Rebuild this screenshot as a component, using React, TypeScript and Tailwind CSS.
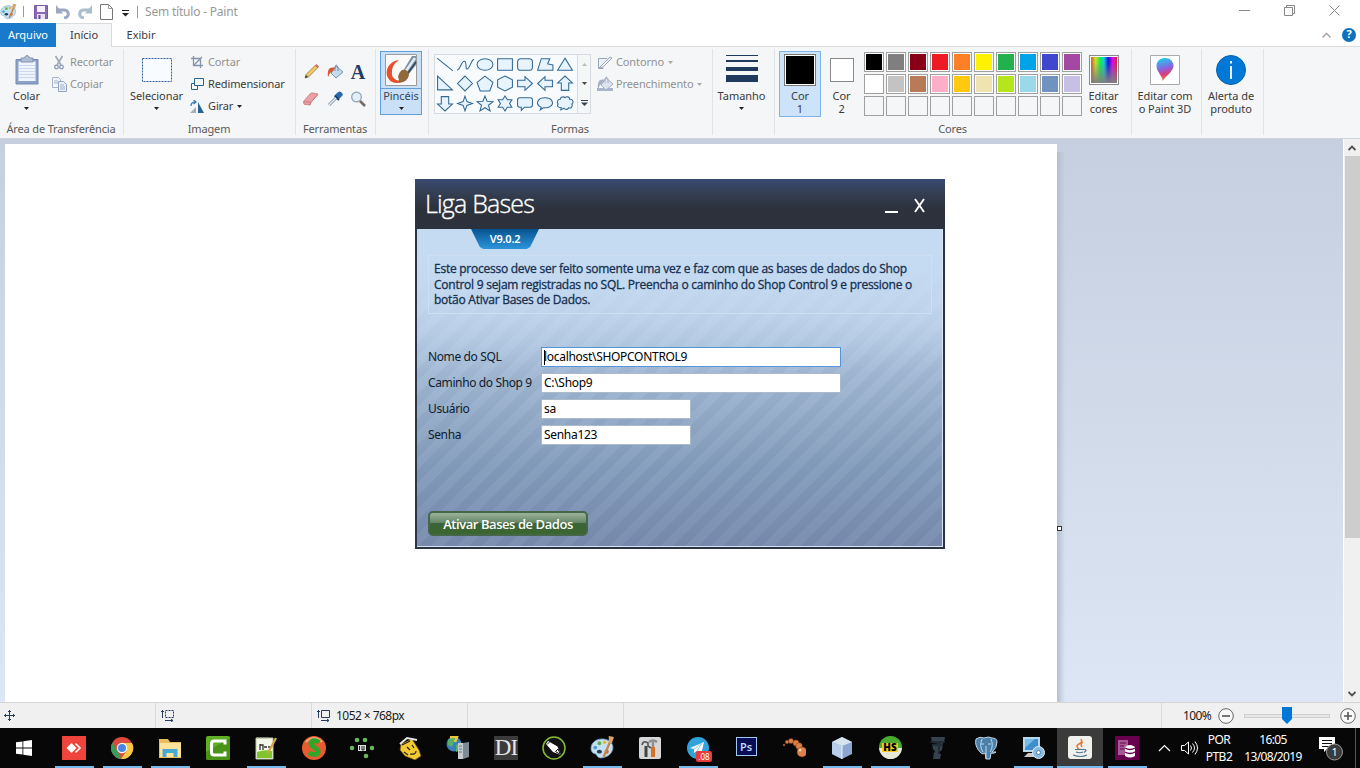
import type { ReactNode } from 'react';

type BoxProps = { w: number; h: number; vb?: string; children: ReactNode; className?: string };

function Svg({ w, h, vb, children, className = '' }: BoxProps) {
  return (
    <svg width={w} height={h} viewBox={vb ?? `0 0 ${w} ${h}`} fill="none" className={`shrink-0 ${className}`}>
      {children}
    </svg>
  );
}

const Arrow = ({ color = '#222' }: { color?: string }) => (
  <Svg w={5} h={3}><path d="M0 0h5L2.5 3z" fill={color} /></Svg>
);

function Palette({ size }: { size: number }) {
  return (
    <Svg w={size} h={size} vb="0 0 24 24">
      <path d="M1 13C1 6 8 3 14 4c5 1 8 4 8 8 0 5-5 10-12 10-3 0-3-3-5-4-2 0-4-2-4-5z" fill="#c5e0f0" stroke="#6fa5c8" strokeWidth=".8" />
      <circle cx="5" cy="12" r="1.8" fill="#4b9fe0" /><circle cx="9" cy="8" r="1.9" fill="#59b34a" /><circle cx="14" cy="7" r="1.7" fill="#eab43a" />
      <circle cx="16" cy="16" r="2" fill="#e05a3a" /><ellipse cx="9" cy="16" rx="2.4" ry="1.8" fill="#253a50" />
      <path d="M21 2l-4 10-4 9" stroke="#c98343" strokeWidth="2.2" /><path d="M18 1l5 1-2 6-3-1z" fill="#dca267" />
    </Svg>
  );
}

function TitleBar() {
  return (
    <header className="flex h-[23px] shrink-0 items-center bg-white">
      <div className="flex h-full flex-1 items-center">
        <Palette size={17} />
        <i className="ml-[6px] h-[11px] w-px bg-[#9a9a9a]" />
        <Svg w={14} h={14} className="ml-[10px]">
          <path d="M.5.5h13v13H.5z" fill="#8a68b4" stroke="#7a5aa6" /><path d="M3 1h8v6H3z" fill="#f4f1fa" /><path d="M3 9h8v5H3z" fill="#e6e0ef" /><path d="M4.500 10h2v4h-2z" fill="#6d4b9b" />
        </Svg>
        <Svg w={14} h={14} className="ml-[8px]">
          <path d="M3 5h5c3 0 4.300 2 4.300 4S11 12.500 8 13" stroke="#9aa8c0" strokeWidth="3" /><path d="M0 0v8.500h7z" fill="#9aa8c0" />
        </Svg>
        <Svg w={14} h={14} className="ml-[8px]">
          <path d="M11 5H6C3 5 1.700 7 1.700 9S3 12.500 6 13" stroke="#a9bdcc" strokeWidth="3" /><path d="M14 0v8.500H7z" fill="#a9bdcc" />
        </Svg>
        <Svg w={13} h={16} className="ml-[8px]"><path d="M.5.5h8l4 4v11H.5z" fill="#fff" stroke="#777" /><path d="M8.500.5v4h4" stroke="#999" /></Svg>
        <Svg w={7} h={7} className="ml-[9px] mt-[3px]"><path d="M0 .5h7" stroke="#222" /><path d="M0 3h7L3.500 6.500z" fill="#222" /></Svg>
        <i className="ml-[8px] h-[12px] w-px bg-[#9a9a9a]" />
        <span className="ml-[7px] text-[12px] tracking-[-0.2px] text-[#999]">Sem título - Paint</span>
      </div>
      <div className="flex w-[121px] justify-between pr-[20px] pb-[3px]">
        <Svg w={11} h={11}><path d="M0 5.500h11" stroke="#888" /></Svg>
        <Svg w={11} h={11}><path d="M.5 2.500h8v8h-8zM2.500 2.500v-2h8v8h-2" stroke="#888" /></Svg>
        <Svg w={11} h={11}><path d="M.5.5l10 10m0-10l-10 10" stroke="#888" /></Svg>
      </div>
    </header>
  );
}

function TabRow() {
  return (
    <nav className="flex h-[24px] shrink-0 bg-white text-[11px] text-[#3b3b3b]">
      <div className="flex w-[56px] items-center justify-center bg-[#1979ca] text-white">Arquivo</div>
      <div className="flex w-[56px] items-center justify-center border-t border-r border-[#dadbdc] bg-[#f5f6f7] pl-px">Início</div>
      <div className="flex w-[58px] items-center justify-center border-b border-[#dadbdc] pt-px">Exibir</div>
      <div className="flex flex-1 items-center justify-end gap-[11px] border-b border-[#dadbdc] pr-[4px]">
        <Svg w={9} h={6}><path d="M.5 5.500l4-4 4 4" stroke="#a99a95" strokeWidth="1.300" /></Svg>
        <span className="flex size-[14px] items-center justify-center rounded-full bg-[#0f6fc0] text-[11px] font-bold text-white">?</span>
      </div>
    </nav>
  );
}

function Group({ width, label, children }: { width: string; label?: string; children: ReactNode }) {
  return (
    <section className={`relative flex shrink-0 flex-col ${width}`}>
      <div className="flex h-[74px]">{children}</div>
      <div className="flex h-[17px] items-center justify-center pr-[2px] text-[11px] tracking-[-0.14px] whitespace-nowrap text-[#5a5a5a]">{label}</div>
      <i className="absolute top-[2px] right-0 h-[86px] w-px bg-[#e2e3e4]" />
    </section>
  );
}

function Big({ width, label, second, children }: { width: string; label: string; second?: string; children: ReactNode }) {
  return (
    <div className={`flex shrink-0 flex-col items-center ${width}`}>
      <div className="flex h-[42px] items-center justify-center pt-[4px]">{children}</div>
      <span className="h-[13px] text-[11px] leading-[13px] tracking-[-0.05px] whitespace-nowrap text-[#3b3b3b]">{label}</span>
      {second ? (
        <span className="h-[13px] text-[11px] leading-[13px] tracking-[-0.05px] whitespace-nowrap text-[#3b3b3b]">{second}</span>
      ) : (
        <span className="mt-[5px]"><Arrow /></span>
      )}
    </div>
  );
}

function Row({ icon, text, dim, arrow }: { icon: ReactNode; text: string; dim?: boolean; arrow?: boolean }) {
  return (
    <div className={`flex h-[22px] items-center text-[11px] tracking-[-0.12px] whitespace-nowrap ${dim ? 'text-[#929292]' : 'text-[#3b3b3b]'}`}>
      <span className="mr-[3px] flex w-[16px] justify-center">{icon}</span>
      {text}
      {arrow && <span className="ml-[4px]"><Arrow color={dim ? '#aaa' : '#222'} /></span>}
    </div>
  );
}

const shapes = [
  'M1 2l15 12', 'M1 13C4 14 5 4 8 5s0 9 3 7 3-8 6-9', 'M1 8a7.500 5.500 0 1 0 15 0a7.500 5.500 0 1 0-15 0', 'M1.500 2.500h14v11h-14z',
  'M4.500 2.500h8q3 0 3 3v5q0 3-3 3h-8q-3 0-3-3v-5q0-3 3-3', 'M5 2.500h8l-2 5 5 1v5H1.500z', 'M8.500 2l7 11.500h-14z',
  'M1.500 1v13h14z', 'M8.500 1l7 7-7 7-7-7z', 'M8.500 1l7.500 6-3 8H4L1 7z', 'M8.500 1l7 3.500v7L8.500 15l-7-3.500v-7z',
  'M1.500 5h7V1.500L15.500 8l-7 6.500V11h-7z', 'M15.500 5h-7V1.500L1.500 8l7 6.500V11h7z', 'M5 14.500v-7H1.500L8.500 1l7 6.500H12v7z',
  'M5 1.500v7H1.500L8.500 15l7-6.500H12v-7z', 'M8.500 1l1.800 5.200L15.500 8l-5.200 1.800L8.500 15l-1.800-5.200L1.500 8l5.200-1.800z',
  'M8.500 1l2 4.800 5.500.4-4.200 3.500 1.500 5.300-4.800-3-4.800 3 1.500-5.300L1 6.200l5.500-.4z',
  'M8.500 1l2.200 3.500h4.300L12.800 8l2.200 3.500h-4.300L8.500 15l-2.200-3.500H2L4.200 8 2 4.500h4.300z',
  'M3.500 2.500h10q2 0 2 2v5q0 2-2 2H8l-3 3v-3H3.500q-2 0-2-2v-5q0-2 2-2', 'M5 11.500C-1 9 1 2.500 8.500 2.500S18 9 12 11.500c-2 .8-4 .6-5 .5l-3 2z',
  'M4 4c0-2 3-3 4.500-1.500C10 1 13 1.500 13 4c3-.5 4 3 2 4.500 1 2.500-1 4.500-3 3.500-1 2-3.500 2-4.500.5L4.500 14l.5-2C2 12 .5 10 2 8.500.5 6.500 1.500 4 4 4z',
];

const colors = [
  '#000000', '#7f7f7f', '#880015', '#ed1c24', '#ff7f27', '#fff200', '#22b14c', '#00a2e8', '#3f48cc', '#a349a4',
  '#ffffff', '#c3c3c3', '#b97a57', '#ffaec9', '#ffc90e', '#efe4b0', '#b5e61d', '#99d9ea', '#7092be', '#c8bfe7',
];

function Bucket({ dim }: { dim?: boolean }) {
  return (
    <Svg w={17} h={16}>
      {dim && <path d="M0 12h16v3H0z" fill="#a9b5c8" />}
      <path d="M9 2l7 6-7 6-5-5z" fill={dim ? '#dde4ee' : '#c3dcee'} stroke={dim ? '#a5b1c4' : '#7894ae'} />
      <path d="M8 7V3q1-4 3 0v4" stroke={dim ? '#a5b1c4' : '#7b8da0'} />
      <path d="M8 4C3 2.500 0 5 1 13c2-3 1-4 4-5z" fill={dim ? '#a5b1c4' : '#d8572f'} />
    </Svg>
  );
}

function Ribbon() {
  return (
    <div className="flex h-[92px] shrink-0 border-b border-[#cfd3dc] bg-[#f5f6f7]">
      <Group width="w-[124px]" label="Área de Transferência">
        <Big width="w-[53px]" label="Colar">
          <Svg w={24} h={30} className="ml-px">
            <path d="M1 4.500h22v24.500H1z" fill="#8ca0c8" stroke="#788bb4" /><path d="M3.500 6.500h17v19.500h-17z" fill="#f0f4fc" />
            <path d="M4 10.500h16M4 13.500h16M4 16.500h16M4 19.500h16M4 22.500h16" stroke="#cbd7ee" /><path d="M6 3h3q3-5 6 0h3v4H6z" fill="#aebcd6" stroke="#8293b8" />
          </Svg>
        </Big>
        <div className="-ml-[2px] pt-[4px]">
          <Row dim text="Recortar" icon={<Svg w={10} h={15}><path d="M1.500 1l5.500 9M8.500 1L3 10" stroke="#a0a9b8" strokeWidth="1.700" /><circle cx="2.500" cy="12" r="1.800" stroke="#8b99b3" strokeWidth="1.300" /><circle cx="7.500" cy="12" r="1.800" stroke="#8b99b3" strokeWidth="1.300" /></Svg>} />
          <Row dim text="Copiar" icon={<Svg w={15} h={15}><path d="M.5.5h6l2 2v8h-8z" fill="#f3f6fb" stroke="#a4b2cb" /><path d="M6.500 4.500h5l3 3v7h-8z" fill="#eaf0f8" stroke="#93a4c2" /><path d="M2 4h4M2 6h4M8 8h4M8 10h5M8 12h5" stroke="#a4b2cb" /></Svg>} />
        </div>
      </Group>

      <Group width="w-[172px]" label="Imagem">
        <Big width="w-[65px]" label="Selecionar">
          <Svg w={30} h={24} className="ml-px"><path d="M.5.5h29v23H.5z" fill="#f8fbff" stroke="#2a6296" strokeDasharray="2 1" /></Svg>
        </Big>
        <div className="pt-[4px]">
          <Row dim text="Cortar" icon={<Svg w={12} h={12}><path d="M0 2.500h9.500V12M2.500 0v9.500H12M3 9l8-8" stroke="#8295aa" strokeWidth="1.300" /></Svg>} />
          <Row text="Redimensionar" icon={<Svg w={13} h={12}><path d="M.5 5.500h6v6h-6z" fill="#fff" stroke="#266391" /><path d="M3.500.5h9v7h-9z" fill="#f4f9fe" stroke="#266391" /></Svg>} />
          <Row text="Girar" arrow icon={<Svg w={14} h={13}><path d="M8 2l6 11H8z" fill="#276694" /><path d="M0 13l6-6v6z" fill="#a6acb2" /><path d="M1 6q0-4 4-4M3.500 0L6 2 3.500 4" stroke="#2878b7" strokeWidth="1.200" /></Svg>} />
        </div>
      </Group>

      <Group width="w-[80px]" label="Ferramentas">
        <div className="mt-[10px] ml-[3px] grid h-[54px] grid-cols-[24px_24px_22px] place-items-center">
          <Svg w={15} h={15}><path d="M1 14l1-3.500L11.500 1l2.500 2.500L4.500 13z" fill="#f2c463" stroke="#8e7440" strokeWidth=".7" /><path d="M11 1.500L12.500 0 15 2.500 13.500 4z" fill="#cf6c65" /><path d="M1 14l1-3 2 2z" fill="#3a3a3a" /></Svg>
          <Bucket />
          <span className="font-['Liberation_Serif',serif] text-[20px] leading-none font-bold text-[#263c5e]">A</span>
          <Svg w={16} h={14}><path d="M.5 9.500l7-8q.5-.7 1.500-.6l6 1.100-7 8.500-1 2.500-6-.8z" fill="#eda0a3" stroke="#ba6d72" strokeWidth=".7" /><path d="M.7 9.500l7 1L15 2.500M7.500 10.500V13" stroke="#c9747c" strokeWidth=".8" /></Svg>
          <Svg w={16} h={16}><path d="M10 2q3-3 5 0 2 2-1 4l-3 3-4-4z" fill="#286ba8" /><path d="M8 5l4 4" stroke="#163e70" strokeWidth="2" /><path d="M2 14l7-7" stroke="#7892ab" strokeWidth="3" /><path d="M2 14l7-7" stroke="#eef5fa" strokeWidth="1.300" /></Svg>
          <Svg w={16} h={16}><circle cx="6.500" cy="6" r="4.800" fill="#e2f0fb" stroke="#98aabd" strokeWidth="1.400" /><path d="M10 10l5 5" stroke="#746c65" strokeWidth="2.600" /></Svg>
        </div>
      </Group>

      <Group width="w-[53px]">
        <button className="mt-[4px] ml-[4px] flex h-[64px] w-[42px] flex-col items-center border border-[#629fd9] bg-[#c9e0f7]">
          <span className="flex h-[37px] w-full items-center justify-center border-b border-[#629fd9] pb-px">
            <Svg w={32} h={32}>
              <path d="M.5.5h31v31H.5z" fill="#fafafa" stroke="#9a9a9a" />
              <path d="M14 6C4 7-1 17 3 24c3 6 11 6 15 3-7 0-12-3-11-9 0-6 3-9 7-12z" fill="#e8502b" />
              <path d="M31 2v9l-8 10-5-4L27 2z" fill="#7890a5" /><path d="M30 4l-9 13" stroke="#e3ebf1" strokeWidth="2.500" /><path d="M31 8l-8 11" stroke="#34485c" strokeWidth="1.500" />
              <path d="M17 16q6-1 7 5-1 7-11 8 2-2 0-6 1-5 4-7z" fill="#93683b" />
            </Svg>
          </span>
          <span className="text-[11px] leading-[14px] tracking-[-0.05px] text-[#34485e]">Pincéis</span>
          <span className="mt-[4px] leading-none"><Arrow /></span>
        </button>
      </Group>

      <Group width="w-[284px]" label="Formas">
        <div className="mt-[7px] ml-[5px] flex h-[60px] w-[157px] border border-[#d5dbe1] bg-[#f8fbfe]">
          <div className="grid w-[142px] shrink-0 grid-cols-7 place-items-center pr-[2px]">
            {shapes.map((d, i) => <Svg key={i} w={18} h={17} vb="0 0 17 16"><path d={d} fill={i < 2 ? 'none' : '#e8f4fd'} stroke="#326894" /></Svg>)}
          </div>
          <div className="grid flex-1 grid-rows-3 place-items-center border-l border-[#d5dbe1] bg-[#f5f6f7]">
            <Svg w={5} h={3}><path d="M0 3h5L2.500 0z" fill="#bbb" /></Svg>
            <Arrow color="#444" />
            <Svg w={7} h={6}><path d="M0 .5h7" stroke="#345" /><path d="M0 2.500h7L3.500 6z" fill="#345" /></Svg>
          </div>
        </div>
        <div className="ml-[6px] pt-[4px]">
          <Row dim arrow text="Contorno" icon={<Svg w={15} h={13}><path d="M9 2.500H.5v10h5M1 12L12 1l2 1-9 9z" fill="#edf0f5" stroke="#98a6bb" /></Svg>} />
          <Row dim arrow text="Preenchimento" icon={<Bucket dim />} />
        </div>
      </Group>

      <Group width="w-[62px]">
        <Big width="w-[57px]" label="Tamanho">
          <div className="flex h-[30px] w-[32px] flex-col">
            <i className="h-px bg-[#1f3a5c]" /><i className="mt-[4px] h-[2px] bg-[#1f3a5c]" /><i className="mt-[5px] h-[4px] bg-[#1f3a5c]" /><i className="mt-[4px] h-[7px] bg-[#1f3a5c]" />
          </div>
        </Big>
      </Group>

      <Group width="w-[357px]" label="Cores">
        <div className="mt-[4px] ml-[4px] flex h-[66px] w-[42px] shrink-0 flex-col items-center border border-[#7eb4ea] bg-[#cce3f9] pt-[2px] text-[11px] leading-[13px] text-[#3b3b3b]">
          <i className="mb-[3px] h-[32px] w-[32px] shrink-0 border border-[#777] bg-black outline outline-1 -outline-offset-2 outline-white" />
          <span className="tracking-[-0.05px]">Cor</span><span>1</span>
        </div>
        <Big width="w-[41px]" label="Cor" second="2"><i className="ml-px size-[24px] border border-[#888] bg-white" /></Big>
        <div className="mt-[5px] ml-[2px] grid h-[64px] shrink-0 grid-cols-10 gap-[2px]">
          {colors.map((c) => <i key={c} className="size-[20px] border border-[#a0a0a0] bg-white p-px"><b className="block size-full" style={{ backgroundColor: c }} /></i>)}
          {Array.from({ length: 10 }, (_, i) => <i key={i} className="size-[20px] border border-[#a0a0a0]" />)}
        </div>
        <Big width="w-[43px]" label="Editar" second="cores">
          <div className="size-[30px] border border-[#8a8a8a] bg-white p-px"><div className="h-full bg-[linear-gradient(to_top,#808080,transparent_80%),linear-gradient(90deg,#d55a20,#cd3_18%,#1e4_35%,#1cd_50%,#11d_66%,#d1d_84%,#e13)]" /></div>
        </Big>
      </Group>

      <Group width="w-[70px]">
        <Big width="w-[66px]" label="Editar com" second="o Paint 3D">
          <Svg w={30} h={30}>
            <defs><linearGradient id="pin" x1=".4" y1="0" x2=".6" y2="1"><stop stopColor="#20c9ed" /><stop offset=".45" stopColor="#8c61df" /><stop offset=".7" stopColor="#dd3b78" /><stop offset="1" stopColor="#ef9b26" /></linearGradient></defs>
            <path d="M.5.5h29v29H.5z" fill="#fff" stroke="#ababab" /><path d="M15 3c5 0 8.500 3.500 8.500 8 0 5-6.500 9-11 15 .5-5-6-9-6-15 0-4.500 3.500-8 8.500-8z" fill="url(#pin)" />
          </Svg>
        </Big>
      </Group>
      <Group width="w-[62px]">
        <Big width="w-[58px]" label="Alerta de" second="produto">
          <Svg w={30} h={30}><circle cx="15" cy="15" r="14.500" fill="#0078d7" stroke="#0862ad" /><path d="M15 11v13M15 6v2.500" stroke="#fff" strokeWidth="1.800" /></Svg>
        </Big>
      </Group>
    </div>
  );
}

function Field({ label, value, width, focus }: { label: string; value: string; width: string; focus?: boolean }) {
  return (
    <label className="flex h-[26px] items-center text-[12px] tracking-[-0.38px] text-[#101c2c]">
      <span className="w-[113px] whitespace-nowrap">{label}</span>
      <span className={`flex h-[20px] items-center border bg-white pl-[2px] tracking-[-0.3px] text-black ${width} ${focus ? 'border-[#5595dc]' : 'border-[#abbacb]'}`}>
        {focus && <i className="-mr-px h-[15px] w-px bg-black" />}
        {value}
      </span>
    </label>
  );
}

function Dialog() {
  return (
    <div className="absolute top-[40px] left-[415px] flex h-[370px] w-[530px] flex-col border-2 border-[#2b3442] font-['Noto_Sans','Open_Sans',sans-serif]">
      <div className="-mx-[2px] -mt-[2px] flex h-[50px] shrink-0 items-center justify-between bg-[linear-gradient(#394b73,#343e51_30%,#2c313b_60%,#2c323d)] pr-[20px] pl-[10px] text-white">
        <h1 className="font-['Open_Sans',sans-serif] text-[25px] font-light tracking-[-0.8px] [-webkit-text-stroke:0.35px_white]">Liga Bases</h1>
        <div className="flex items-end gap-[16px] pt-[4px]">
          <i className="mb-[4px] h-[2px] w-[13px] bg-white" />
          <Svg w={11} h={22}><path d="M1 4l9 13M10 4L1 17" stroke="#fff" strokeWidth="1.900" /></Svg>
        </div>
      </div>
      <div className="flex flex-1 flex-col border-r border-b border-[#d8e4f5] bg-[linear-gradient(#c5dbf1_8%,#c5dbf100_45%),repeating-linear-gradient(135deg,#ffffff0a_0px,#ffffff0a_9px,#00000005_9px,#00000005_18px),linear-gradient(#c5dbf1_0%,#bacfe8_25%,#9cb3cf_50%,#839cbc_75%,#778bae_100%)] px-[11px]">
        <div className="ml-[43px] h-[20px] w-[68px] bg-[linear-gradient(#07538f,#2c95dc)] text-center text-[11px] leading-[20px] font-semibold tracking-[-0.2px] text-white [clip-path:polygon(0_0,100%_0,87%_90%,82%_100%,18%_100%,13%_90%)]">V9.0.2</div>
        <p className="mt-[6px] h-[59px] w-[504px] border border-[#cfdff2] pt-[5px] pl-[5px] font-['Open_Sans',sans-serif] text-[12px] leading-[15.700px] tracking-[-0.25px] whitespace-nowrap text-[#152f50] [-webkit-text-stroke:0.3px_#152f50]">
          Este processo deve ser feito somente uma vez e faz com que as bases de dados do Shop<br />
          Control 9 sejam registradas no SQL. Preencha o caminho do Shop Control 9 e pressione o<br />
          botão Ativar Bases de Dados.
        </p>
        <div className="mt-[30px]">
          <Field label="Nome do SQL" value="localhost\SHOPCONTROL9" width="w-[300px]" focus />
          <Field label="Caminho do Shop 9" value="C:\Shop9" width="w-[300px]" />
          <Field label="Usuário" value="sa" width="w-[150px]" />
          <Field label="Senha" value="Senha123" width="w-[150px]" />
        </div>
        <button className="mt-[63px] h-[25px] w-[160px] rounded-[5px] border-2 border-[#46664a] bg-[linear-gradient(#9db39b,#668768_45%,#3c6438_50%,#3a6630)] font-['Open_Sans',sans-serif] text-[13px] leading-[20px] font-semibold tracking-[-0.44px] whitespace-nowrap text-white">Ativar Bases de Dados</button>
      </div>
    </div>
  );
}

function Workspace() {
  return (
    <main className="relative flex h-[563px] shrink-0 bg-[linear-gradient(#c5cfdf,#dce6f4)]">
      <div className="mt-[5px] ml-[5px] w-[1052px] shrink-0 bg-white" />
      <div className="mt-[13px] w-[8px] bg-[linear-gradient(90deg,#b3bfd2,transparent)]" />
      <div className="flex-1" />
      <i className="absolute top-[387px] left-[1057px] size-[5px] border border-[#333] bg-white" />
      <div className="flex w-[17px] flex-col items-center border-l border-white bg-[#f0f0f0]">
        <span className="flex h-[17px] items-center"><Svg w={8} h={6}><path d="M.5 5l3.500-3.500L7.500 5" stroke="#505050" strokeWidth="1.800" /></Svg></span>
        <i className="h-[382px] w-[15px] bg-[#cdcdcd]" />
        <span className="mt-auto flex h-[17px] items-center"><Svg w={8} h={6}><path d="M.5 1l3.500 3.500L7.500 1" stroke="#505050" strokeWidth="1.800" /></Svg></span>
      </div>
      <Dialog />
    </main>
  );
}

function ZoomButton({ plus }: { plus?: boolean }) {
  return <Svg w={16} h={16}><circle cx="8" cy="8" r="7.300" fill="#f8f8f8" stroke="#666" /><path d={plus ? 'M4 8h8M8 4v8' : 'M4 8h8'} stroke="#555" strokeWidth="1.600" /></Svg>;
}

function StatusBar() {
  return (
    <footer className="flex h-[26px] shrink-0 items-stretch border-t border-[#d5d5d5] bg-[#f0f0f0] text-[12px] text-[#1a1a1a]">
      <div className="flex w-[156px] items-center border-r border-[#d9d9d9] pl-[4px]"><Svg w={11} h={11}><path d="M5.500 0v11M0 5.500h11M4 2l1.500-1.500L7 2M4 9l1.500 1.500L7 9M2 4L.5 5.500 2 7M9 4l1.500 1.500L9 7" stroke="#263c58" /></Svg></div>
      <div className="flex w-[156px] items-center border-r border-[#d9d9d9] pl-[5px]"><Svg w={13} h={12}><path d="M1.500 0v8M0 2l1.500-1.500L3 2M4 10.500h8M10 9l2 1.500-2 1.500" stroke="#263c58" /><path d="M4.500.5h8v7h-8z" stroke="#263c58" strokeDasharray="2 1" /></Svg></div>
      <div className="flex w-[156px] items-center border-r border-[#d9d9d9] pl-[5px] tracking-[-0.55px]"><Svg w={13} h={12} className="mr-[6px]"><path d="M1.500 0v8M0 2l1.500-1.500L3 2M4 10.500h8M10 9l2 1.500-2 1.500M4.500.5h8v7h-8z" stroke="#263c58" /></Svg>1052 × 768px</div>
      <div className="w-[156px] border-r border-[#d9d9d9]" />
      <div className="flex-1 border-r border-[#d9d9d9]" />
      <div className="flex w-[198px] items-center pl-[21px] tracking-[-0.6px]">
        <span className="w-[35px]">100%</span>
        <ZoomButton />
        <div className="relative ml-[10px] h-[4px] w-[86px] border border-[#d0d0d0] bg-[#e7e7e7]">
          <Svg w={10} h={17} className="absolute -top-[8px] left-[37px]"><path d="M0 0h10v12l-5 5-5-5z" fill="#0078d7" /></Svg>
        </div>
        <span className="ml-[10px]"><ZoomButton plus /></span>
      </div>
    </footer>
  );
}

const apps: { on?: boolean; icon: ReactNode }[] = [
  { on: true, icon: <Svg w={24} h={24}><path d="M0 0h24v24H0z" fill="#ef443b" /><path d="M9.500 7l5 5-5 5-5-5z" fill="#fff" /><path d="M13.500 7.500L18 12l-4.500 4.500" stroke="#fff" strokeWidth="1.600" /></Svg> },
  { on: true, icon: <Svg w={24} h={24}><circle cx="12" cy="12" r="11" fill="#db4a3d" /><path d="M2.500 6.500L9 18l2 5A11 11 0 0 1 2.500 6.500z" fill="#389d58" /><path d="M12 7h10a11 11 0 0 1-11 16l5.500-8z" fill="#f6c944" /><circle cx="12" cy="12" r="5.200" fill="#fff" /><circle cx="12" cy="12" r="4" fill="#4a86e8" /></Svg> },
  { on: true, icon: <Svg w={24} h={24}><path d="M1 3h9l2 3h11v16H1z" fill="#e9bd59" /><path d="M2 7h21v14H2z" fill="#fbe39b" /><path d="M4.500 13h15v8h-4v-4h-7v4h-4z" fill="#46a9d4" /></Svg> },
  { icon: <Svg w={24} h={24}><rect width="24" height="24" rx="2" fill="#5eaf24" /><path d="M0 16L24 2v20q0 2-2 2H2q-2 0-2-2z" fill="#4b9317" /><path d="M19 8.500V5H8Q5.500 5 5.500 8v8q0 3 2.500 3h11v-3.500" stroke="#fff" strokeWidth="3" /></Svg> },
  { on: true, icon: <Svg w={24} h={24}><path d="M2 2h17v21H2z" fill="#f4f8e8" stroke="#b8c7a2" /><path d="M3 16q8-3 15-1v7H3z" fill="#7fc42c" /><path d="M4 3V1m3 2V1m3 2V1m3 2V1" stroke="#aaa" /><path d="M6 8v6m0-5h3v5m1-3h3m1 0h3" stroke="#333" strokeWidth="1.300" /><path d="M22 2l-7 13-1 2" stroke="#d5a648" strokeWidth="2.300" /></Svg> },
  { icon: <Svg w={24} h={24}><circle cx="12" cy="12" r="12" fill="#e65c30" /><path d="M4 6q8-8 16 0" stroke="#f9aa7a" strokeWidth="2" /><path d="M17 6.500c-3-3-9-2-8 1.500s7 4 7 7.500-6 4-9 1" stroke="#2fa62a" strokeWidth="5" /></Svg> },
  { icon: <Svg w={24} h={24}>{[[7, 4], [15, 4], [2, 12], [22, 12], [16, 20]].map(([x, y]) => <circle key={`${x}-${y}`} cx={x} cy={y} r="2.300" fill="#65b95a" />)}<path d="M8 9h8v6H8z" fill="#ddd" /><path d="M9.500 10v4M12 10v4h2v-4" stroke="#222" /></Svg> },
  { icon: <Svg w={24} h={24}><path d="M3 8L14 3l7 11 2 6-6 4-10-4-5-6z" fill="#f3ca31" stroke="#674b15" strokeWidth=".7" /><path d="M2 8L9 2l10 2" stroke="#e5e5e5" strokeWidth="2" /><path d="M4 9l8-4M14 9l2 3M9 11l3 3M12 18q6 1 6-3M6 16l4 3" stroke="#222" strokeWidth="1.200" /></Svg> },
  { icon: <Svg w={24} h={24}><circle cx="8" cy="8" r="7.500" fill="#387fc0" /><path d="M2 4q5-6 7 0l-3 7-4-2zM10 9l5-3v8l-5 2z" fill="#55b268" /><path d="M4 1h7l-2 5" stroke="#eacb35" strokeWidth="2.500" /><path d="M12 7h5v16h-5z" fill="#c8cdd3" /><path d="M17 7l6-1v15l-6 2z" fill="#7f8b94" /><path d="M13 10h3m-3 3h3m-3 3h3" stroke="#69747d" /></Svg> },
  { icon: <span className="flex size-[24px] items-center justify-center bg-[#3b3b3b] font-['Liberation_Serif',serif] text-[23px] leading-none tracking-[-1px] text-[#e5e5e5]">DI</span> },
  { icon: <Svg w={24} h={24}><circle cx="12" cy="12" r="11" fill="#111" stroke="#84bc39" strokeWidth="1.500" /><path d="M6 5l9.500 5.500L19 19l-8-3L4 8z" fill="#fff" /><path d="M5 8.500l3-3M13.500 15.500L16 13l2.500 5.500z" stroke="#111" /></Svg> },
  { on: true, icon: <Palette size={25} /> },
  { icon: <Svg w={22} h={24}><rect y="1" width="22" height="22" rx="2" fill="#d5d7d9" /><path d="M3 9q1-4 4-3l2 1v3l3 2" stroke="#555" strokeWidth="1.600" /><path d="M10 6q4-3 8 0M14 6v6" stroke="#8c8c8c" strokeWidth="2.400" /><path d="M14 11v10" stroke="#d66f27" strokeWidth="4" /><path d="M7 10v11" stroke="#444" strokeWidth="3" /></Svg> },
  { on: true, icon: <span className="relative"><Svg w={24} h={24}><circle cx="12" cy="12" r="11" fill="#2fa4dc" /><path d="M4 12l14-6-3 13-4-4-3 2v-4z" fill="#fff" /><path d="M8 13l8-6-5 8" stroke="#9cc9e4" /></Svg><b className="absolute -right-[2px] -bottom-[2px] h-[11px] w-[16px] rounded-[2px] bg-[#e53c3c] text-center text-[8px] leading-[11px] font-normal text-white">.08</b></span> },
  { icon: <span className="mb-[3px] flex h-[19px] w-[21px] items-center justify-center border border-[#a4c9ee] bg-[#080c54] text-[11px] leading-none font-semibold text-[#bcdcfb]">Ps</span> },
  { icon: <Svg w={24} h={24}>{[[2, 9, 1], [5, 6, 1.8], [9, 5, 2.5], [14, 7, 3], [17, 10, 3.3], [20, 16, 5]].map(([x, y, r]) => <circle key={x} cx={x} cy={y} r={r} fill="#dc8148" stroke="#7d3517" strokeWidth=".5" />)}<circle cx="18" cy="14" r="1.500" fill="#ffd4ac" /></Svg> },
  { on: true, icon: <Svg w={22} h={24}><path d="M11 1l10 5v12l-10 5L1 18V6z" fill="#8ba7d0" /><path d="M11 1l10 5-10 4L1 6z" fill="#d6e4ef" /><path d="M1 6l10 4v13L1 18z" fill="#b9cfe9" /><path d="M11 10v13" stroke="#ecf4fb" /></Svg> },
  { on: true, icon: <span className="flex size-[23px] items-center justify-center rounded-full bg-[linear-gradient(#4cac2e_50%,#e8e8d9_50%)] text-[10px] font-bold text-black"><b className="bg-[#f5cd24] px-px leading-[9px]">HS</b></span> },
  { icon: <Svg w={18} h={24}><path d="M2 1h14l-1 6H3zM3 8l11-1-1 7-5 4-4-5zM5 16l7 2-1 5H4z" fill="#34434f" /><path d="M1 6h15M3 9h11M10 10v7" stroke="#1d272f" strokeWidth="1.500" /></Svg> },
  { icon: <Svg w={24} h={24}><path d="M2 3q4-3 8-1 5-2 8 0 5 0 5 4 0 6-5 10h4q-2 2-5 1l-1 6h-4l-1-6q-2 2-4 0Q0 10 2 3z" fill="#4b80ab" stroke="#c2d7e7" /><path d="M8 3q-3 7 1 13M12 23V10M17 3q3 7-1 13M7 8h3M14 8h3" stroke="#c2d7e7" /></Svg> },
];

function TaskButton({ on, children, className = 'w-[48px]' }: { on?: boolean; children: ReactNode; className?: string }) {
  return (
    <div className={`flex h-full shrink-0 flex-col items-center ${className}`}>
      <div className="flex h-[38px] items-center pt-px">{children}</div>
      {on && <i className="h-[2px] w-[39px] bg-[#76b9ed]" />}
    </div>
  );
}

function Taskbar() {
  return (
    <footer className="flex h-[40px] shrink-0 bg-[#070707] text-white">
      <TaskButton className="w-[50px] pr-[2px]"><Svg w={16} h={16}><path d="M0 2.300l6.500-.9v6.200H0zM7.300 1.300L16 0v7.600H7.300zM0 8.400h6.500v6.200L0 13.700zM7.300 8.400H16V16l-8.700-1.300z" fill="#fff" /></Svg></TaskButton>
      {apps.map((a, i) => <TaskButton key={i} on={a.on}>{a.icon}</TaskButton>)}
      <TaskButton on className="w-[47px]">
        <Svg w={24} h={24}><path d="M1 1h17v15H1z" fill="#b8d9ed" /><path d="M3 3h13v11H3z" fill="#3f8dcc" /><path d="M3 3h10L3 12z" fill="#79bbe8" /><path d="M6 17h7l3 4H2z" fill="#c9cbc7" /><circle cx="16.500" cy="16.500" r="6" fill="#8abbe0" stroke="#e1edf6" /><circle cx="16.500" cy="16.500" r="2" fill="#fff" stroke="#467da5" /></Svg>
      </TaskButton>
      <div className="flex h-full w-[46px] shrink-0 flex-col items-center border-b-2 border-[#76b9ed] bg-[#3b3b3b] pt-[8px]">
        <Svg w={24} h={23}><rect width="24" height="23" rx="3" fill="#f0f0ed" /><path d="M13 3q2 3-2 5t0 5M15 6q-3 2-1 5" stroke="#e57832" strokeWidth="1.500" /><path d="M7 13.500h9M8 16q4 1.500 7 0M16 13.500q4 0 0 3M5 19q8 3 14 0" stroke="#4a748e" strokeWidth="1.200" /></Svg>
      </div>
      <TaskButton on>
        <Svg w={24} h={24}><path d="M0 0h24v24H0z" fill="#68004f" /><path d="M3 4h10v15H3z" fill="#a35a90" /><path d="M5 7h6m-6 3h4m-4 3h4" stroke="#68004f" /><path d="M10 11q5-4 10 0v9q-5 3-10 0z" fill="#fff" /><path d="M10 12q5 3 10 0m-10 4q5 3 10 0" stroke="#68004f" strokeWidth="1.300" /></Svg>
      </TaskButton>
      <div className="flex flex-1 items-center text-[12px] leading-[17px]">
        <Svg w={13} h={8} className="ml-[7px]"><path d="M1 7l5.500-5.500L12 7" stroke="#fff" strokeWidth="1.200" /></Svg>
        <Svg w={17} h={14} className="ml-[10px]"><path d="M.5 4.500h3l4-3.500v12l-4-3.500h-3zM9.500 4.500q2 2.500 0 5M11.500 2.500q4 4.500 0 9M14 .5q5 6.500 0 13" stroke="#fff" /></Svg>
        <div className="ml-[6px] w-[30px] pb-px text-center tracking-[-0.5px]">POR<br />PTB2</div>
        <div className="ml-[9px] w-[60px] pb-px text-center tracking-[-0.65px]">16:05<br />13/08/2019</div>
        <Svg w={26} h={26} className="ml-[16px]"><path d="M0 2h16v12H8l-3 3v-3H0z" fill="#fff" /><path d="M3 5.500h10M3 8.500h10M3 11.500h7" stroke="#111" /><circle cx="15.500" cy="17" r="8" fill="#3b3b3b" stroke="#999" /><text x="12.500" y="21" fontSize="11" fill="#fff">1</text></Svg>
        <i className="ml-auto h-full w-[5px] border-l border-[#555]" />
      </div>
    </footer>
  );
}

export default function App() {
  return (
    <div className="flex h-[768px] w-[1360px] flex-col overflow-hidden bg-white font-['Noto_Sans','Open_Sans',sans-serif]">
      <TitleBar />
      <TabRow />
      <Ribbon />
      <Workspace />
      <StatusBar />
      <Taskbar />
    </div>
  );
}
